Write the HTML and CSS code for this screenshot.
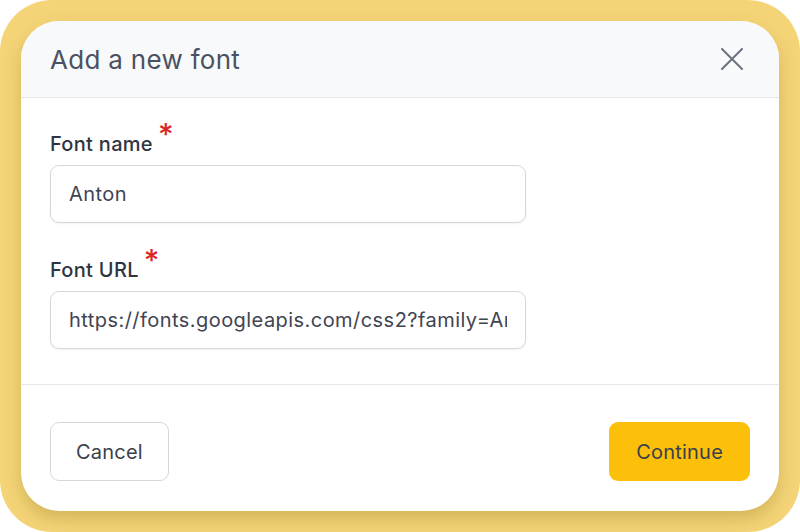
FILE: index.html
```html
<!DOCTYPE html>
<html lang="en">
<head>
  <meta charset="UTF-8" />
  <meta name="viewport" content="width=device-width, initial-scale=1.0" />
  <title>Add a new font</title>
  <link rel="stylesheet" href="styles.css">
</head>
<body>
  <div class="frame">
    <div class="modal">
      <div class="modal-header">
        <h2>Add a new font</h2>
        <button class="close-btn" aria-label="Close">
          <svg width="22" height="22" viewBox="0 0 22 22" fill="none" stroke="#6b7280" stroke-width="2" stroke-linecap="round">
            <path d="M1 1L21 21M21 1L1 21" />
          </svg>
        </button>
      </div>
      <form class="modal-body" id="fontForm">
        <div class="field">
          <label for="fontName">Font name<span class="req">*</span></label>
          <input type="text" id="fontName" value="Anton" />
        </div>
        <div class="field">
          <label for="fontUrl">Font URL<span class="req">*</span></label>
          <input type="text" id="fontUrl" value="https://fonts.googleapis.com/css2?family=Anton&display=swap" />
        </div>
      </form>
      <div class="modal-footer">
        <button type="button" class="btn btn-secondary">Cancel</button>
        <button type="submit" form="fontForm" class="btn btn-primary">Continue</button>
      </div>
    </div>
  </div>
</body>
</html>
```

FILE: styles.css
```css
* {
  box-sizing: border-box;
}
body {
  font-family: 'Inter', 'Liberation Sans', sans-serif;
  background: #ffffff;
  margin: 0;
  width: 800px;
  height: 532px;
  overflow: hidden;
}
.frame {
  width: 800px;
  height: 532px;
  background: #f4d477;
  border-radius: 52px;
  padding: 21px;
}
.modal {
  background: white;
  height: 490px;
  border-radius: 38px;
  overflow: hidden;
  display: flex;
  flex-direction: column;
  box-shadow: 0 8px 16px rgba(120, 90, 0, 0.25);
}
.modal-header {
  height: 77px;
  background: #f8f9fb;
  border-bottom: 1px solid #e5e7eb;
  display: flex;
  align-items: center;
  justify-content: space-between;
  padding: 0 36px 0 29px;
}
.modal-header h2 {
  margin: 0;
  font-size: 26px;
  font-weight: 400;
  color: #4b5160;
  letter-spacing: 0.3px;
}
.close-btn {
  background: none;
  border: none;
  padding: 0;
  width: 22px;
  height: 22px;
  cursor: pointer;
  display: flex;
}
.modal-body {
  flex: 1;
  margin: 0;
  padding: 33px 29px 0;
  border-bottom: 1px solid #e5e7eb;
}
.field {
  margin-bottom: 34px;
}
.field label {
  display: block;
  font-size: 20px;
  font-weight: 500;
  color: #2f3441;
  line-height: 26px;
  letter-spacing: 0.3px;
  margin-bottom: 8px;
}
.req {
  color: #dc2626;
  font-size: 30px;
  line-height: 0;
  position: relative;
  top: -6px;
  margin-left: 5px;
}
.field input {
  width: 476px;
  height: 58px;
  padding: 0 18px;
  font-family: inherit;
  font-size: 20px;
  letter-spacing: 0.45px;
  color: #3f4451;
  border: 1px solid #d4d7dc;
  border-radius: 9px;
  outline: none;
  box-shadow: 0 1px 2px rgba(0, 0, 0, 0.06);
}
.modal-footer {
  height: 126px;
  display: flex;
  align-items: center;
  justify-content: space-between;
  padding: 7px 29px 0;
}
.btn {
  height: 59px;
  padding: 0 25px;
  font-family: inherit;
  font-size: 20px;
  letter-spacing: 0.2px;
  color: #3a3f4c;
  border-radius: 9px;
  cursor: pointer;
}
.btn-secondary {
  background: white;
  border: 1px solid #d4d7dc;
}
.btn-primary {
  background: #fcc00b;
  border: none;
  padding: 0 27px;
}
```
